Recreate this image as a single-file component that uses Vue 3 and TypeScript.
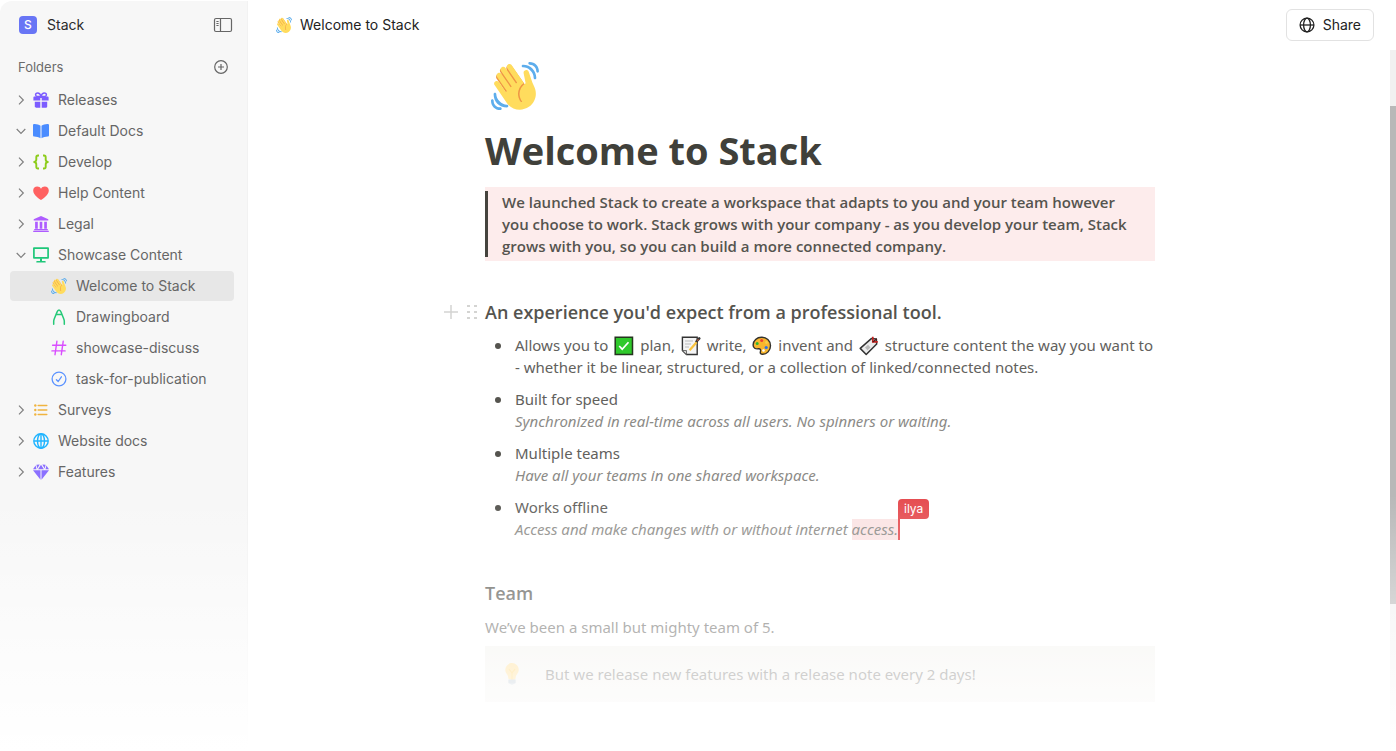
<script setup lang="ts">
interface TreeItem {
  label: string
  icon: string
  open?: boolean
  children?: TreeItem[]
}

const folders: TreeItem[] = [
  { label: 'Releases', icon: 'gift' },
  { label: 'Default Docs', icon: 'book', open: true },
  { label: 'Develop', icon: 'braces' },
  { label: 'Help Content', icon: 'heart' },
  { label: 'Legal', icon: 'bank' },
  {
    label: 'Showcase Content',
    icon: 'screen',
    open: true,
    children: [
      { label: 'Welcome to Stack', icon: 'wave' },
      { label: 'Drawingboard', icon: 'compass' },
      { label: 'showcase-discuss', icon: 'hash' },
      { label: 'task-for-publication', icon: 'task' },
    ],
  },
  { label: 'Surveys', icon: 'list' },
  { label: 'Website docs', icon: 'globe' },
  { label: 'Features', icon: 'gem' },
]

const activePage = 'Welcome to Stack'

const features = [
  { title: 'Built for speed', note: 'Synchronized in real-time across all users. No spinners or waiting.' },
  { title: 'Multiple teams', note: 'Have all your teams in one shared workspace.' },
]
</script>

<template>
  <div class="app">
    <svg class="sprite" aria-hidden="true">
      <symbol id="wave" viewBox="0 0 36 36">
        <path fill="#EF9645" d="M4.861 9.147c.94-.657 2.357-.531 3.201.166l-.968-1.407c-.779-1.111-.5-2.313.612-3.093 1.112-.777 4.263 1.312 4.263 1.312-.786-1.122-.639-2.544.483-3.331 1.122-.784 2.67-.513 3.456.611l10.42 14.72L25 31l-11.083-4.042L4.25 12.625c-.793-1.129-.519-2.686.611-3.478z" />
        <path fill="#FFDC5D" d="M2.695 17.336s-1.132-1.65.519-2.781c1.649-1.131 2.78.518 2.78.518l5.251 7.658c.181-.302.379-.6.6-.894L4.557 11.21s-1.131-1.649.519-2.78c1.649-1.131 2.78.518 2.78.518l6.855 9.997c.255-.208.516-.417.785-.622L7.549 6.732s-1.131-1.649.519-2.78c1.649-1.131 2.78.518 2.78.518l7.947 11.589c.292-.179.581-.334.871-.498L12.238 4.729s-1.131-1.649.518-2.78c1.649-1.131 2.78.518 2.78.518l7.854 11.454 1.194 1.742c-4.948 3.394-5.419 9.779-2.592 13.902.565.825 1.39.26 1.39.26-3.393-4.949-2.357-10.51 2.592-13.903L24.515 8.62s-.545-1.924 1.378-2.47c1.924-.545 2.47 1.379 2.47 1.379l1.685 5.004c.668 1.984 1.379 3.961 2.32 5.831 2.657 5.28 1.07 11.842-3.94 15.279-5.465 3.747-12.936 2.354-16.684-3.11L2.695 17.336z" />
        <path fill="#5DADEC" d="M12 32.042C8 32.042 3.958 28 3.958 24c0-.553-.405-1-.958-1s-1.042.447-1.042 1C1.958 30 6 34.042 12 34.042c.553 0 1-.489 1-1.042s-.447-.958-1-.958z" />
        <path fill="#5DADEC" d="M7 34c-3 0-5-2-5-5 0-.553-.447-1-1-1s-1 .447-1 1c0 4 3 7 7 7 .553 0 1-.447 1-1s-.447-1-1-1zM24 2c-.552 0-1 .448-1 1s.448 1 1 1c4 0 8 3.589 8 8 0 .552.448 1 1 1s1-.448 1-1c0-5.514-4-10-10-10z" />
        <path fill="#5DADEC" d="M29 .042c-.552 0-1 .406-1 .958s.448 1.042 1 1.042c3 0 4.958 2.225 4.958 4.958 0 .552.489 1 1.042 1s.958-.448.958-1C35.958 3.163 33 .042 29 .042z" />
      </symbol>
      <symbol id="gift" viewBox="0 0 16 16">
        <path fill="none" stroke="currentColor" stroke-width="1.5" d="M8 4.2C7.4 2 6.2.9 4.7.9 3.4.9 2.6 1.9 2.6 2.800c0 1 .7 1.600 1.600 1.600zM8 4.200C8.600 2 9.800.9 11.300.9c1.300 0 2.100 1 2.100 1.900 0 1-.7 1.600-1.600 1.600z" />
        <path fill="currentColor" d="M1.300 4.600h13.400c.6 0 .9.300.9.900v3H8.700V5.900H7.300v2.600H.4v-3c0-.6.300-.9.900-.9zM1.800 9.700h5.500v6H3c-.8 0-1.200-.4-1.200-1.200zM8.700 9.700h5.500v4.800c0 .8-.4 1.200-1.200 1.200H8.700z" />
      </symbol>
      <symbol id="book" viewBox="0 0 16 16">
        <path fill="currentColor" d="M0 2.300C0 1.300.7.900 1.600 1c2.300.3 4.400.8 5.900 1.700v12.500c-1.800-1-4-1.500-6.200-1.600C.5 13.500 0 13.100 0 12.300zM16 2.300c0-1-.7-1.400-1.600-1.300-2.300.3-4.400.8-5.900 1.700v12.500c1.800-1 4-1.500 6.200-1.600.8-.1 1.300-.5 1.300-1.300z" />
      </symbol>
      <symbol id="braces" viewBox="0 0 16 16">
        <path fill="none" stroke="currentColor" stroke-width="1.900" stroke-linejoin="round" d="M6 1.500H5c-1.200 0-1.700.7-1.700 1.800v2.200C3.300 7 2.600 7.800 1.200 8c1.400.2 2.100 1 2.100 2.500v2.200c0 1.100.5 1.800 1.700 1.800h1M10 1.500h1c1.200 0 1.700.7 1.700 1.800v2.200c0 1.500.7 2.300 2.100 2.500-1.400.2-2.100 1-2.100 2.500v2.200c0 1.100-.5 1.800-1.700 1.800h-1" />
      </symbol>
      <symbol id="heart" viewBox="0 0 16 16">
        <path fill="currentColor" d="M8 15C6.300 13.800.2 9.800.2 5.400.2 3 2 1.400 4.200 1.400 5.900 1.400 7.300 2.300 8 3.700c.7-1.400 2.100-2.300 3.800-2.300 2.200 0 4 1.600 4 4C15.800 9.800 9.700 13.800 8 15z" />
      </symbol>
      <symbol id="bank" viewBox="0 0 16 16">
        <path fill="currentColor" d="M8 0l7.300 3.300v1.200H.7V3.300zM2.100 5.700h2.700v7H2.100zM6.700 5.700h2.600v7H6.700zM11.200 5.700h2.700v7h-2.700zM1.200 13.100h13.600v1.100H1.200zM.2 14.700h15.600V16H.2z" />
      </symbol>
      <symbol id="screen" viewBox="0 0 16 16">
        <path fill="none" stroke="currentColor" stroke-width="1.700" stroke-linejoin="round" d="M.9 1.100h14.200v9.700H.9z" />
        <path fill="currentColor" d="M7 11.200h2v2.700h2.800c.7 0 .9.300.9 1.600H3.300c0-1.300.2-1.600.9-1.600H7z" />
      </symbol>
      <symbol id="compass" viewBox="0 0 16 16">
        <path fill="none" stroke="currentColor" stroke-width="1.500" stroke-linecap="round" d="M2.700 15.200v-2.900c0-1.100.2-1.600.6-2.600L6 3.100C6.500 1.800 7 1 8 1s1.500.8 2 2.100l2.700 6.600c.4 1 .6 1.500.6 2.600v2.900M5.200 5.600h5.600" />
      </symbol>
      <symbol id="hash" viewBox="0 0 16 16">
        <path fill="none" stroke="currentColor" stroke-width="1.400" stroke-linecap="round" d="M5.900 1.300L4 14.700M12.200 1.300l-1.900 13.400M1.600 5.200h13.200M.9 10.900h13.200" />
      </symbol>
      <symbol id="task" viewBox="0 0 16 16">
        <g fill="none" stroke="currentColor" stroke-width="1.300" stroke-linecap="round" stroke-linejoin="round">
          <circle cx="8" cy="8" r="6.900" />
          <path d="M5.400 8.700l1.800 1.800 3.200-4.700" />
        </g>
      </symbol>
      <symbol id="list" viewBox="0 0 16 16">
        <path fill="none" stroke="currentColor" stroke-width="1.500" stroke-linecap="round" d="M5.200 3.500h8.600M5.200 8h8.600M5.200 12.500h8.600" />
        <g fill="currentColor">
          <circle cx="2.300" cy="3.500" r="1.200" /><circle cx="2.300" cy="8" r="1.200" /><circle cx="2.300" cy="12.500" r="1.200" />
        </g>
      </symbol>
      <symbol id="globe" viewBox="0 0 16 16">
        <g fill="none" stroke="currentColor" stroke-width="1.400">
          <circle cx="8" cy="8" r="7.200" /><ellipse cx="8" cy="8" rx="3.500" ry="7.200" />
          <path d="M1 8h14M8 1v14" />
        </g>
      </symbol>
      <symbol id="globe-thin" viewBox="0 0 16 16">
        <g fill="none" stroke="currentColor" stroke-width="1.300">
          <circle cx="8" cy="8" r="6.900" /><ellipse cx="8" cy="8" rx="3.400" ry="6.900" />
          <path d="M1 8h14" />
        </g>
      </symbol>
      <symbol id="gem" viewBox="0 0 16 16">
        <path fill="currentColor" d="M3.400.8L6.700.5 4.300 4.500zM8 .8l2.900 4.400H5.100zM12.600.8L9.300.5l2.400 4zM2.600 1.400l.9 3.800H0zM13.400 1.400l-.9 3.800H16zM0 6.200h7.500v9.600zM16 6.200H8.500v9.600z" />
      </symbol>
      <symbol id="check" viewBox="0 0 20 20">
        <path fill="#2fc92b" stroke="#25351f" stroke-width="1.500" d="M1.200 1.200h17.300v17.300H1.200z" />
        <path fill="none" stroke="#fff" stroke-width="1.700" d="M5.200 10l3 3.200 6.300-7" />
      </symbol>
      <symbol id="memo" viewBox="0 0 20 20">
        <path fill="#f4f4f4" stroke="#333" stroke-width="1.400" d="M1.400 1.200h14.800v17.300H5.500l-4.100-4z" />
        <path fill="#d0d0d0" stroke="#555" stroke-width=".8" d="M1.400 14.500h4.100v4z" />
        <path stroke="#bbb" stroke-width="1" d="M4 5h8M4 8h6M4 11h4" />
        <path stroke="#333" stroke-width="2.600" stroke-linecap="round" d="M15.500 5.500l2.700-3" />
        <path stroke="#f9c23c" stroke-width="2.200" d="M8.600 14.200l7-8" />
        <path stroke="#a4513c" stroke-width="1.400" d="M16.200 4.900l1.400-1.600" />
      </symbol>
      <symbol id="palette" viewBox="0 0 20 20">
        <path fill="#f8b62d" stroke="#33312d" stroke-width="1.400" d="M9.500 1.200c5 0 9 3.300 9 8.500 0 5-3.800 8.600-7.800 8.600-2.200 0-2.700-1.300-2.300-2.600.6-1.800-.1-3.200-2-2.900-2.800.4-5.300-.6-5.300-3.800 0-4.300 3.800-7.800 8.400-7.800z" />
        <circle cx="5.200" cy="7.400" r="1.500" fill="#2fb52d" /><circle cx="9.700" cy="4.500" r="1.500" fill="#ec4233" />
        <circle cx="14.500" cy="6.500" r="1.400" fill="#f6cf48" /><circle cx="14.200" cy="11.500" r="1.600" fill="#2672ec" />
        <circle cx="11.500" cy="14.500" r="1.300" fill="#fff" />
      </symbol>
      <symbol id="tag" viewBox="0 0 20 20">
        <path fill="#ececec" stroke="#333" stroke-width="1.500" stroke-linejoin="round" d="M1.200 12.400L12.300 2.600l5 .5.4 4.900L7.200 18.500z" />
        <path fill="#bbb" d="M6 11.500l3-2.800 2.500 2.800-3 2.800z" />
        <path fill="none" stroke="#c5221f" stroke-width="1.700" d="M13.800.8v5.100h5" />
        <path stroke="#4a1918" stroke-width="1.200" d="M13.700 5.900l4.200-3.200" />
      </symbol>
      <symbol id="bulb" viewBox="0 0 36 36">
        <path fill="#FFD983" d="M29 11.060c0 6.439-5 7.439-5 13.440 0 3.098-3.123 3.359-5.500 3.359-2.053 0-6.586-.779-6.586-3.361C11.914 18.500 7 17.500 7 11.060 7 5.029 12.285.140 18.083.140 23.883.140 29 5.029 29 11.060z" />
        <path fill="#CCD6DD" d="M22.200 32.500c0 .8-2 3.400-4.200 3.400s-4.200-2.600-4.200-3.400z" />
        <path fill="none" stroke="#FFCC4D" stroke-width="1.800" d="M13 10l5 6 5-6M18 16v11" />
        <path fill="#B4C2CC" d="M12 27h12v5c0 1-.5 1.500-1.500 1.500h-9C12.500 33.500 12 33 12 32z" />
      </symbol>
    </svg>

    <aside class="sidebar">
      <div class="workspace">
        <span class="logo">S</span>
        <span class="workspace-name">Stack</span>
        <button class="icon-button" type="button" aria-label="Toggle sidebar">
          <svg width="20" height="16" viewBox="0 0 20 16" fill="none" stroke="currentColor">
            <rect x="1.500" y="1.500" width="17" height="13" rx="1.500" stroke-width="1.200" />
            <path d="M7.500 1.500v13" stroke-width="1.200" />
            <path d="M3.400 4.500h2.200M3.400 6.500h2.200M3.400 8.500h2.200" stroke-width="1" />
          </svg>
        </button>
      </div>

      <div class="section">
        <span>Folders</span>
        <button class="icon-button" type="button" aria-label="Add folder">
          <svg width="16" height="16" viewBox="0 0 16 16" fill="none" stroke="currentColor" stroke-width="1.200">
            <circle cx="8" cy="8" r="6.300" />
            <path d="M8 5v6M5 8h6" />
          </svg>
        </button>
      </div>

      <nav aria-label="Folders">
        <ul class="tree">
          <li v-for="folder in folders" :key="folder.label">
            <a class="row" href="#">
              <svg class="chevron" :class="{ open: folder.open }" width="12" height="12" viewBox="0 0 12 12" fill="none" stroke="currentColor" stroke-width="1.200">
                <path d="M4 1.700L8.300 6 4 10.300" />
              </svg>
              <svg class="icon" :class="folder.icon"><use :href="'#' + folder.icon" /></svg>
              <span>{{ folder.label }}</span>
            </a>
            <ul v-if="folder.children">
              <li v-for="page in folder.children" :key="page.label">
                <a class="row child" :class="{ active: page.label === activePage }" href="#">
                  <svg class="icon" :class="page.icon"><use :href="'#' + page.icon" /></svg>
                  <span>{{ page.label }}</span>
                </a>
              </li>
            </ul>
          </li>
        </ul>
      </nav>
    </aside>

    <main class="main">
      <header class="topbar">
        <svg class="icon"><use href="#wave" /></svg>
        <span>Welcome to Stack</span>
        <button class="share" type="button">
          <svg class="icon"><use href="#globe-thin" /></svg>
          <span>Share</span>
        </button>
      </header>

      <div class="scroller">
        <article class="doc">
          <svg class="cover"><use href="#wave" /></svg>
          <h1>Welcome to Stack</h1>
          <blockquote>
            <p>We launched Stack to create a workspace that adapts to you and your team however you choose to work. Stack grows with your company - as you develop your team, Stack grows with you, so you can build a more connected company.</p>
          </blockquote>

          <div class="heading">
            <div class="handles">
              <svg width="14" height="14" viewBox="0 0 14 14" stroke="currentColor" stroke-width="1.500"><path d="M7 0v14M0 7h14" /></svg>
              <svg width="10" height="14" viewBox="0 0 10 14" fill="currentColor">
                <path d="M0 0h3v2H0zM7 0h3v2H7zM0 6h3v2H0zM7 6h3v2H7zM0 12h3v2H0zM7 12h3v2H7z" />
              </svg>
            </div>
            <h2>An experience you'd expect from a professional tool.</h2>
          </div>

          <ul class="bullets">
            <li>
              Allows you to <svg class="emoji"><use href="#check" /></svg> plan,
              <svg class="emoji"><use href="#memo" /></svg> write,
              <svg class="emoji"><use href="#palette" /></svg> invent and
              <svg class="emoji"><use href="#tag" /></svg> structure content the way you want to - whether it be linear, structured, or a collection of linked/connected notes.
            </li>
            <li v-for="item in features" :key="item.title">
              {{ item.title }}<br /><em>{{ item.note }}</em>
            </li>
            <li>
              Works offline<br /><em>Access and make changes with or without internet <span class="selection">access.<span class="cursor-name">ilya</span></span></em>
            </li>
          </ul>

          <h2 class="team">Team</h2>
          <p class="text">We’ve been a small but mighty team of 5.</p>
          <div class="callout">
            <svg class="bulb"><use href="#bulb" /></svg>
            <p>But we release new features with a release note every 2 days!</p>
          </div>
        </article>
      </div>
      <div class="scrollbar"><div class="thumb"></div></div>
    </main>
    <div class="fade"></div>
  </div>
</template>

<style>
body {
  margin: 0;
  background: #fff;
}
</style>

<style scoped>
.app {
  position: relative;
  display: flex;
  height: 100vh;
  overflow: hidden;
  background: #fff;
  font-family: Inter, "Liberation Sans", sans-serif;
  font-size: 14px;
  line-height: 20px;
}
.sprite {
  position: absolute;
  width: 0;
  height: 0;
}
ul {
  margin: 0;
  padding: 0;
  list-style: none;
}
p,
h1,
h2,
blockquote {
  margin: 0;
}
button {
  font: inherit;
  color: inherit;
  cursor: pointer;
}
.icon {
  flex: none;
  width: 16px;
  height: 16px;
}

/* Sidebar */
.sidebar {
  flex: none;
  box-sizing: border-box;
  width: 248px;
  margin-top: 1px;
  padding: 0 13px 0 10px;
  border-right: 1px solid #f2f2f2;
  border-top-left-radius: 12px;
  background: #f7f7f7;
  color: #6b6b6b;
}
.workspace {
  display: flex;
  align-items: center;
  height: 48px;
  padding: 0 1px 0 9px;
  gap: 10px;
  color: #2b2b2b;
}
.logo {
  width: 18px;
  height: 18px;
  border-radius: 4px;
  background: #6875f5;
  color: #fff;
  font-size: 12px;
  font-weight: 500;
  line-height: 18px;
  text-align: center;
}
.icon-button {
  display: flex;
  margin-left: auto;
  padding: 0;
  border: 0;
  background: none;
  color: #666;
}
.section {
  display: flex;
  align-items: center;
  height: 36px;
  padding: 0 5px 0 8px;
  font-size: 13px;
}
.tree li {
  display: block;
}
.row {
  display: flex;
  align-items: center;
  height: 30px;
  margin-bottom: 1px;
  padding-left: 5px;
  border-radius: 4px;
  color: #666;
  text-decoration: none;
}
.row.child {
  padding-left: 41px;
}
.row.active {
  background: #e7e7e7;
}
.row span {
  margin-left: 9px;
}
.chevron {
  flex: none;
  margin-right: 6px;
  color: #808080;
}
.chevron.open {
  transform: rotate(90deg);
}
.gift { color: #7c5cff; }
.book { color: #4a8cff; }
.braces { color: #8ccc1a; }
.heart { color: #ff6161; }
.bank { color: #ae5cff; }
.screen { color: #1fc77a; }
.compass { color: #25c978; }
.hash { color: #d94dff; }
.task { color: #5c93ff; }
.list { color: #f0b440; }
.globe { color: #1fb4ff; }
.gem { color: #8b70ff; }

/* Main column */
.main {
  position: relative;
  display: flex;
  flex: 1;
  flex-direction: column;
  min-width: 0;
}
.topbar {
  display: flex;
  flex: none;
  align-items: center;
  box-sizing: border-box;
  height: 50px;
  padding: 0 22px 0 28px;
  gap: 8px;
  color: #222;
}
.share {
  display: flex;
  align-items: center;
  height: 32px;
  margin-left: auto;
  padding: 0 12px;
  gap: 8px;
  border: 1px solid #e2e2e2;
  border-radius: 6px;
  background: #fff;
}
.scroller {
  flex: 1;
  min-height: 0;
  padding-right: 4px;
  overflow: hidden;
}
.doc {
  max-width: 670px;
  margin: 0 auto;
  padding: 12px 24px 0;
  color: #62615d;
  font-family: "Noto Sans", "Open Sans", sans-serif;
  font-size: 15px;
  line-height: 22px;
}
.cover {
  display: block;
  width: 48px;
  height: 48px;
  margin-left: 6px;
}
h1 {
  margin-top: 12px;
  color: #40403a;
  font-family: "Open Sans", "Noto Sans", sans-serif;
  font-size: 38px;
  font-weight: 700;
  line-height: 56px;
}
blockquote {
  margin: 9px 0 0;
  padding: 4px 16px 4px 0;
  background: #fdecec;
  color: #55544f;
  font-family: "Open Sans", "Noto Sans", sans-serif;
  font-weight: 600;
}
blockquote p {
  padding-left: 14px;
  border-left: 3px solid #45443e;
}
h2 {
  color: #55544f;
  font-family: "Open Sans", "Noto Sans", sans-serif;
  font-size: 18px;
  font-weight: 600;
  line-height: 26px;
}
.heading {
  position: relative;
  margin-top: 38px;
}
.handles {
  position: absolute;
  top: 0;
  right: 100%;
  display: flex;
  align-items: center;
  height: 26px;
  padding-right: 8px;
  gap: 9px;
  color: #d4d4d2;
}
.bullets {
  margin-top: 9px;
}
.bullets li {
  position: relative;
  margin-bottom: 10px;
  padding-left: 30px;
}
.bullets li::before {
  position: absolute;
  top: 9px;
  left: 10px;
  width: 6px;
  height: 6px;
  border-radius: 50%;
  background: #55544f;
  content: "";
}
.emoji {
  width: 20px;
  height: 20px;
  margin: 0 2px;
  vertical-align: -5px;
}
em {
  color: #8c8b87;
}
.selection {
  position: relative;
  display: inline-block;
  height: 21px;
  line-height: 21px;
  border-right: 2px solid #e54b4f;
  background: #fbe3e3;
}
.cursor-name {
  position: absolute;
  bottom: 100%;
  left: 100%;
  padding: 0 6px;
  border-radius: 4px 4px 4px 0;
  background: #e54b4f;
  color: #fff;
  font-family: Inter, sans-serif;
  font-size: 12px;
  font-style: normal;
  line-height: 20px;
}
.team {
  margin-top: 40px;
}
.text {
  margin-top: 10px;
}
.callout {
  display: flex;
  align-items: center;
  height: 56px;
  margin-top: 8px;
  padding-left: 16px;
  gap: 22px;
  background: #f3f2ee;
}
.bulb {
  width: 22px;
  height: 22px;
}
.scrollbar {
  position: absolute;
  top: 50px;
  right: 0;
  bottom: 0;
  width: 6px;
  background: #f1f1f1;
}
.thumb {
  height: 71%;
  margin-top: 56px;
  background: #b8b8b8;
}
.fade {
  position: absolute;
  right: 0;
  bottom: 0;
  left: 0;
  height: 256px;
  background: linear-gradient(rgb(255 255 255 / 0), #fff);
  pointer-events: none;
}
</style>
